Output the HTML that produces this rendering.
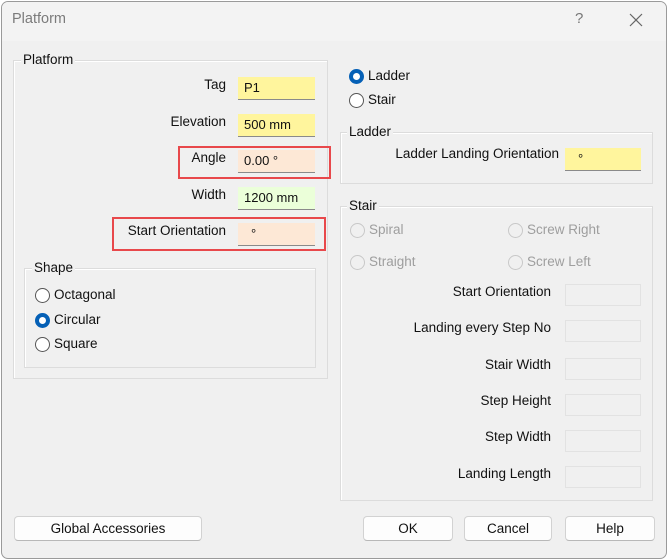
<!DOCTYPE html>
<html><head><style>
*{box-sizing:border-box;margin:0;padding:0}
body{width:668px;height:560px;background:#fff;font-family:"Liberation Sans",sans-serif;font-size:13.5px;color:#111;position:relative;overflow:hidden}
.win{position:absolute;left:1px;top:1px;width:666px;height:558px;background:#f0f0f0;border:1px solid #9a9a9a;border-radius:7px;overflow:hidden}
.tb{position:absolute;left:0;top:0;width:100%;height:39px;background:#f3f3f3}
.a{position:absolute;white-space:nowrap}
.lbl{position:absolute;height:16px;line-height:16px;text-align:right;white-space:nowrap;top:0}
.grp{position:absolute;border:1px solid #dcdcdc;box-shadow:inset 1px 1px 0 #fff}
.gl{position:absolute;background:#f0f0f0;padding:0 2px;line-height:16px;white-space:nowrap}
.in{position:absolute;width:77px;height:23px;border-bottom:1px solid #8a8a8a;padding-left:6px;line-height:22px;font-size:13px}
.din{position:absolute;width:76px;height:22px;border:1px solid #e2e2e2;background:#f0f0f0}
.rad{position:absolute;width:15px;height:15px;border:1px solid #555;border-radius:50%;background:#fff}
.rad.on{border:4px solid #0560b6;background:#fff}
.rad.dis{border-color:#c8c8c8;background:#f0f0f0}
.dis{color:#9e9e9e}
.red{position:absolute;border:2.5px solid #e8484b}
.btn{position:absolute;height:25px;background:#fdfdfd;border:1px solid #d2d2d2;border-bottom-color:#b8b8b8;border-radius:4px;text-align:center;line-height:23px}
</style></head><body>
<div class="win">
<div class="tb"></div>
</div>
<div class="a" style="left:12px;top:11px;font-size:14.5px;color:#7b7b7b">Platform</div>
<div class="a" style="left:575px;top:10px;font-size:15px;color:#777">?</div>
<svg class="a" style="left:629px;top:13px" width="14" height="14"><path d="M1 1L13 13M13 1L1 13" stroke="#666" stroke-width="1.2"/></svg>

<div class="grp" style="left:13px;top:60px;width:315px;height:319px"></div>
<div class="gl" style="left:21px;top:52px">Platform</div>
<div class="lbl" style="left:100px;width:126px;top:77px">Tag</div>
<div class="lbl" style="left:100px;width:126px;top:114px">Elevation</div>
<div class="lbl" style="left:100px;width:126px;top:150px">Angle</div>
<div class="lbl" style="left:100px;width:126px;top:187px">Width</div>
<div class="lbl" style="left:100px;width:126px;top:223px">Start Orientation</div>
<div class="in" style="left:238px;top:77px;background:#fff59d">P1</div>
<div class="in" style="left:238px;top:114px;background:#fff59d">500 mm</div>
<div class="in" style="left:238px;top:150px;background:#fde8d6">0.00 °</div>
<div class="in" style="left:238px;top:187px;background:#ebffd9">1200 mm</div>
<div class="in" style="left:238px;top:223px;background:#fde8d6;padding-left:13px">°</div>
<div class="red" style="left:178px;top:146px;width:153px;height:33px"></div>
<div class="red" style="left:112px;top:217px;width:214px;height:34px"></div>

<div class="grp" style="left:24px;top:268px;width:292px;height:100px"></div>
<div class="gl" style="left:32px;top:260px">Shape</div>
<div class="rad" style="left:35px;top:288px"></div><div class="a" style="left:54px;top:287px">Octagonal</div>
<div class="rad on" style="left:35px;top:313px"></div><div class="a" style="left:54px;top:312px">Circular</div>
<div class="rad" style="left:35px;top:337px"></div><div class="a" style="left:54px;top:336px">Square</div>

<div class="rad on" style="left:349px;top:69px"></div><div class="a" style="left:368px;top:68px">Ladder</div>
<div class="rad" style="left:349px;top:93px"></div><div class="a" style="left:368px;top:92px">Stair</div>

<div class="grp" style="left:340px;top:132px;width:313px;height:52px"></div>
<div class="gl" style="left:347px;top:124px">Ladder</div>
<div class="lbl" style="left:380px;width:179px;top:146px">Ladder Landing Orientation</div>
<div class="in" style="left:565px;top:148px;width:76px;background:#fff59d;padding-left:13px">°</div>

<div class="grp" style="left:340px;top:206px;width:313px;height:295px"></div>
<div class="gl" style="left:347px;top:198px">Stair</div>
<div class="rad dis" style="left:350px;top:223px"></div><div class="a dis" style="left:369px;top:222px">Spiral</div>
<div class="rad dis" style="left:508px;top:223px"></div><div class="a dis" style="left:527px;top:222px">Screw Right</div>
<div class="rad dis" style="left:350px;top:255px"></div><div class="a dis" style="left:369px;top:254px">Straight</div>
<div class="rad dis" style="left:508px;top:255px"></div><div class="a dis" style="left:527px;top:254px">Screw Left</div>
<div class="lbl" style="left:380px;width:171px;top:284px">Start Orientation</div>
<div class="lbl" style="left:380px;width:171px;top:320px">Landing every Step No</div>
<div class="lbl" style="left:380px;width:171px;top:357px">Stair Width</div>
<div class="lbl" style="left:380px;width:171px;top:393px">Step Height</div>
<div class="lbl" style="left:380px;width:171px;top:429px">Step Width</div>
<div class="lbl" style="left:380px;width:171px;top:466px">Landing Length</div>
<div class="din" style="left:565px;top:284px"></div>
<div class="din" style="left:565px;top:320px"></div>
<div class="din" style="left:565px;top:358px"></div>
<div class="din" style="left:565px;top:394px"></div>
<div class="din" style="left:565px;top:430px"></div>
<div class="din" style="left:565px;top:466px"></div>

<div class="btn" style="left:14px;top:516px;width:188px">Global Accessories</div>
<div class="btn" style="left:363px;top:516px;width:90px">OK</div>
<div class="btn" style="left:464px;top:516px;width:88px">Cancel</div>
<div class="btn" style="left:565px;top:516px;width:90px">Help</div>
</body></html>
